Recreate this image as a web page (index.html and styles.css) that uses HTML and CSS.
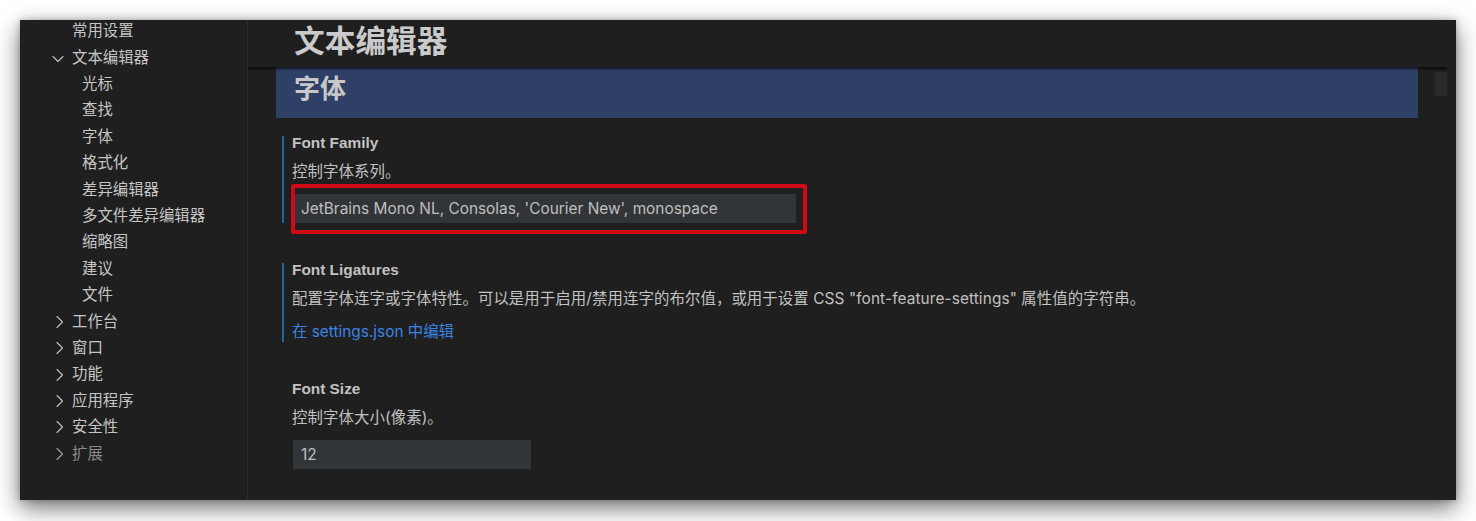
FILE: index.html
```html
<!DOCTYPE html>
<html lang="zh-CN">
<head>
<meta charset="utf-8">
<title>设置 - 文本编辑器</title>
<link rel="stylesheet" href="styles.css">
</head>
<body>
<div class="window">
  <nav class="sidebar">
    <ul class="tree">
      <li class="row lvl0"><span class="twisty"></span><span>常用设置</span></li>
      <li class="row lvl0"><svg class="twisty" viewBox="0 0 16 16"><path d="M3 6.5 L8 11.5 L13 6.5"/></svg><span>文本编辑器</span></li>
      <li class="row lvl1"><span>光标</span></li>
      <li class="row lvl1"><span>查找</span></li>
      <li class="row lvl1 selected"><span>字体</span></li>
      <li class="row lvl1"><span>格式化</span></li>
      <li class="row lvl1"><span>差异编辑器</span></li>
      <li class="row lvl1"><span>多文件差异编辑器</span></li>
      <li class="row lvl1"><span>缩略图</span></li>
      <li class="row lvl1"><span>建议</span></li>
      <li class="row lvl1"><span>文件</span></li>
      <li class="row lvl0"><svg class="twisty" viewBox="0 0 16 16"><path d="M7 2.5 L12.5 8 L7 13.5"/></svg><span>工作台</span></li>
      <li class="row lvl0"><svg class="twisty" viewBox="0 0 16 16"><path d="M7 2.5 L12.5 8 L7 13.5"/></svg><span>窗口</span></li>
      <li class="row lvl0"><svg class="twisty" viewBox="0 0 16 16"><path d="M7 2.5 L12.5 8 L7 13.5"/></svg><span>功能</span></li>
      <li class="row lvl0"><svg class="twisty" viewBox="0 0 16 16"><path d="M7 2.5 L12.5 8 L7 13.5"/></svg><span>应用程序</span></li>
      <li class="row lvl0"><svg class="twisty" viewBox="0 0 16 16"><path d="M7 2.5 L12.5 8 L7 13.5"/></svg><span>安全性</span></li>
      <li class="row lvl0 dim"><svg class="twisty" viewBox="0 0 16 16"><path d="M7 2.5 L12.5 8 L7 13.5"/></svg><span>扩展</span></li>
    </ul>
  </nav>
  <main class="main">
    <h1 class="page-title">文本编辑器</h1>
    <div class="scroller">
      <div class="content">
        <h2 class="section-header">字体</h2>
        <div class="setting modified">
          <div class="s-title">Font Family</div>
          <div class="s-desc">控制字体系列。</div>
          <div class="s-input-wrap">
            <div class="s-input wide">JetBrains Mono NL, Consolas, 'Courier New', monospace</div>
            <div class="annotation"></div>
          </div>
        </div>
        <div class="setting modified">
          <div class="s-title">Font Ligatures</div>
          <div class="s-desc">配置字体连字或字体特性。可以是用于启用/禁用连字的布尔值，或用于设置 CSS "font-feature-settings" 属性值的字符串。</div>
          <a class="s-link" href="#">在 settings.json 中编辑</a>
        </div>
        <div class="setting">
          <div class="s-title">Font Size</div>
          <div class="s-desc">控制字体大小(像素)。</div>
          <div class="s-input-wrap">
            <div class="s-input narrow">12</div>
          </div>
        </div>
      </div>
      <div class="thumb"></div>
    </div>
  </main>
</div>
</body>
</html>
```

FILE: styles.css
```css
* { box-sizing: border-box; }

html, body {
  margin: 0;
  background: #ffffff;
}

body {
  padding: 20px 20px 21px 20px;
  font-family: "Inter", "Noto Sans CJK SC", sans-serif;
  font-size: 15.4px;
  color: #c4c4c4;
}

.window {
  width: 1436px;
  height: 480px;
  background: #1f1f1f;
  display: flex;
  overflow: hidden;
  box-shadow: 0 8px 22px rgba(0, 0, 0, 0.55), 0 0 6px rgba(0, 0, 0, 0.25);
}

/* ---------- sidebar ---------- */
.sidebar {
  width: 228px;
  flex: none;
  border-right: 1px solid #2b2b2b;
  overflow: hidden;
}

.tree {
  list-style: none;
  margin: -1.7px 0 0 0;
  padding: 0;
}

.row {
  height: 26.4px;
  line-height: 26.4px;
  display: flex;
  align-items: center;
  white-space: nowrap;
  color: #c6c6c6;
}

.row.lvl0 { padding-left: 30px; }
.row.lvl1 { padding-left: 62px; }
.row.dim { color: #8a8a8a; }

.twisty {
  width: 16px;
  height: 16px;
  flex: none;
  margin-right: 6px;
  display: inline-block;
}

svg.twisty path {
  fill: none;
  stroke: #c0c0c0;
  stroke-width: 1.1;
  stroke-linecap: round;
  stroke-linejoin: round;
}

.row.dim svg.twisty path { stroke: #a0a0a0; }

/* ---------- main ---------- */
.main {
  flex: 1;
  display: flex;
  flex-direction: column;
  min-width: 0;
}

.page-title {
  margin: 0;
  height: 47px;
  padding-left: 46px;
  font-size: 30.7px;
  line-height: 41px;
  font-weight: 700;
  color: #cacaca;
}

.scroller {
  position: relative;
  width: 1199px;
  flex: 1;
  overflow: hidden;
}

.scroller::before {
  content: "";
  position: absolute;
  left: 0;
  right: 0;
  top: 0;
  height: 4px;
  background: linear-gradient(rgba(0, 0, 0, 0.7), rgba(0, 0, 0, 0));
  z-index: 2;
}

.thumb {
  position: absolute;
  right: 0;
  top: 5px;
  width: 12px;
  height: 24px;
  background: #2a2a2a;
}

.content {
  padding: 0 29px 0 28px;
}

.section-header {
  margin: 0;
  height: 51px;
  background: #2f4067;
  padding-left: 18px;
  font-size: 26px;
  line-height: 44px;
  font-weight: 700;
  color: #c8c8c8;
}

.setting {
  margin: 40px 0 0 6px;
  padding-left: 8px;
  border-left: 2px solid transparent;
}

.section-header + .setting { margin-top: 18px; }

.setting.modified { border-left-color: #1b6ba3; }

.s-title {
  line-height: 14px;
  font-family: "Liberation Sans", "Noto Sans CJK SC", sans-serif;
  font-weight: 700;
  color: #c2c2c2;
}

.s-desc {
  margin-top: 12px;
  line-height: 20px;
  color: #c2c2c2;
  white-space: nowrap;
  letter-spacing: 0.1px;
}

.s-input-wrap {
  position: relative;
  margin-top: 12px;
  margin-left: 1px;
}

.s-input {
  height: 29px;
  line-height: 29px;
  padding-left: 8px;
  background: #323537;
  color: #bfbfbf;
  white-space: nowrap;
}

.s-input.wide { width: 503px; }
.s-input.narrow { width: 238px; }

.annotation {
  position: absolute;
  left: -2px;
  top: -10px;
  width: 516px;
  height: 50px;
  border: 4px solid #cf0a16;
  border-radius: 2px;
}

.s-link {
  display: block;
  margin-top: 13px;
  line-height: 20px;
  color: #3a84e4;
  text-decoration: none;
}
```
